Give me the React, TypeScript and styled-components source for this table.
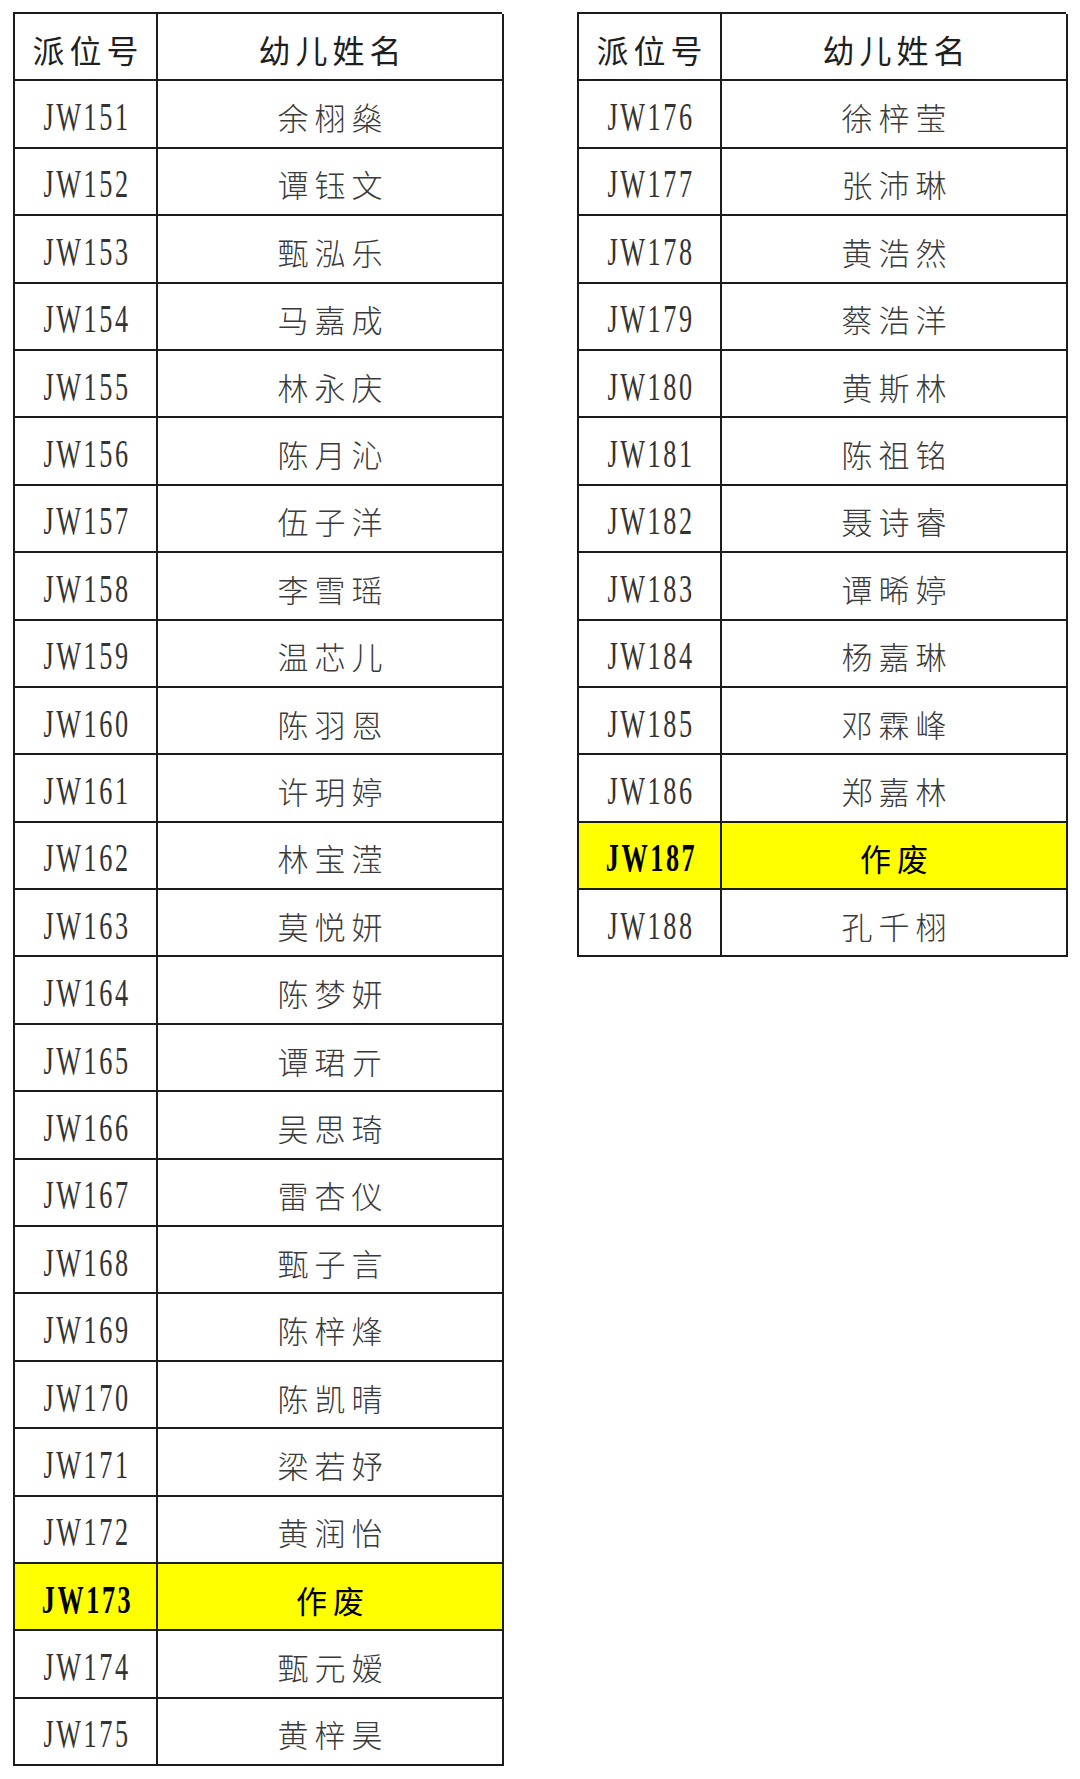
import React from "react";
import styled, { createGlobalStyle } from "styled-components";

const Global = createGlobalStyle`
  html, body { margin: 0; padding: 0; background: #ffffff; }
  body { width: 1080px; height: 1779px; overflow: hidden; }
`;

const Page = styled.div`
  display: flex;
  align-items: flex-start;
  gap: 75px;
  padding: 12px 0 0 13px;
  box-sizing: border-box;
  width: 1080px;
  height: 1779px;
  background: #ffffff;
`;

const Table = styled.div`
  display: grid;
  grid-template-columns: 143px 346px;
  grid-auto-rows: 67.4px;
  width: 489px;
  border-top: 2px solid #1c1c1c;
  border-left: 2px solid #1c1c1c;
  box-sizing: border-box;
`;

const Cell = styled.div<{ $hl?: boolean }>`
  display: flex;
  align-items: center;
  justify-content: center;
  box-sizing: border-box;
  border-right: 2px solid #1c1c1c;
  border-bottom: 2px solid #1c1c1c;
  background: ${(p) => (p.$hl ? "#ffff00" : "#ffffff")};
  padding-top: 5px;
`;

const HeadText = styled.span`
  font-family: "Noto Sans CJK SC", sans-serif;
  font-size: 32px;
  letter-spacing: 5px;
  margin-right: -5px;
  color: #1f1f1f;
  font-weight: 400;
`;

const IdText = styled.span<{ $hl?: boolean }>`
  display: inline-block;
  font-family: "Liberation Serif", "Times New Roman", serif;
  font-size: 41px;
  line-height: 1;
  transform: scaleX(0.64);
  color: ${(p) => (p.$hl ? "#000000" : "#333333")};
  font-weight: ${(p) => (p.$hl ? 700 : 400)};
  letter-spacing: 4px;
  margin-right: -4px;
`;

const NameText = styled.span<{ $hl?: boolean }>`
  font-family: "Noto Sans CJK SC", sans-serif;
  font-size: 31px;
  letter-spacing: 6px;
  margin-right: -6px;
  color: ${(p) => (p.$hl ? "#000000" : "#3a3a3a")};
  font-weight: ${(p) => (p.$hl ? 400 : 300)};
`;

type Row = { id: string; name: string; hl?: boolean };

const left: Row[] = [
  { id: "JW151", name: "余栩燊" },
  { id: "JW152", name: "谭钰文" },
  { id: "JW153", name: "甄泓乐" },
  { id: "JW154", name: "马嘉成" },
  { id: "JW155", name: "林永庆" },
  { id: "JW156", name: "陈月沁" },
  { id: "JW157", name: "伍子洋" },
  { id: "JW158", name: "李雪瑶" },
  { id: "JW159", name: "温芯儿" },
  { id: "JW160", name: "陈羽恩" },
  { id: "JW161", name: "许玥婷" },
  { id: "JW162", name: "林宝滢" },
  { id: "JW163", name: "莫悦妍" },
  { id: "JW164", name: "陈梦妍" },
  { id: "JW165", name: "谭珺亓" },
  { id: "JW166", name: "吴思琦" },
  { id: "JW167", name: "雷杏仪" },
  { id: "JW168", name: "甄子言" },
  { id: "JW169", name: "陈梓烽" },
  { id: "JW170", name: "陈凯晴" },
  { id: "JW171", name: "梁若妤" },
  { id: "JW172", name: "黄润怡" },
  { id: "JW173", name: "作废", hl: true },
  { id: "JW174", name: "甄元嫒" },
  { id: "JW175", name: "黄梓昊" },
];

const right: Row[] = [
  { id: "JW176", name: "徐梓莹" },
  { id: "JW177", name: "张沛琳" },
  { id: "JW178", name: "黄浩然" },
  { id: "JW179", name: "蔡浩洋" },
  { id: "JW180", name: "黄斯林" },
  { id: "JW181", name: "陈祖铭" },
  { id: "JW182", name: "聂诗睿" },
  { id: "JW183", name: "谭晞婷" },
  { id: "JW184", name: "杨嘉琳" },
  { id: "JW185", name: "邓霖峰" },
  { id: "JW186", name: "郑嘉林" },
  { id: "JW187", name: "作废", hl: true },
  { id: "JW188", name: "孔千栩" },
];

const RosterTable: React.FC<{ rows: Row[] }> = ({ rows }) => (
  <Table>
    <Cell>
      <HeadText>派位号</HeadText>
    </Cell>
    <Cell>
      <HeadText>幼儿姓名</HeadText>
    </Cell>
    {rows.map((r) => (
      <React.Fragment key={r.id}>
        <Cell $hl={r.hl}>
          <IdText $hl={r.hl}>{r.id}</IdText>
        </Cell>
        <Cell $hl={r.hl}>
          <NameText $hl={r.hl}>{r.name}</NameText>
        </Cell>
      </React.Fragment>
    ))}
  </Table>
);

export default function App() {
  return (
    <>
      <Global />
      <Page>
        <RosterTable rows={left} />
        <RosterTable rows={right} />
      </Page>
    </>
  );
}
